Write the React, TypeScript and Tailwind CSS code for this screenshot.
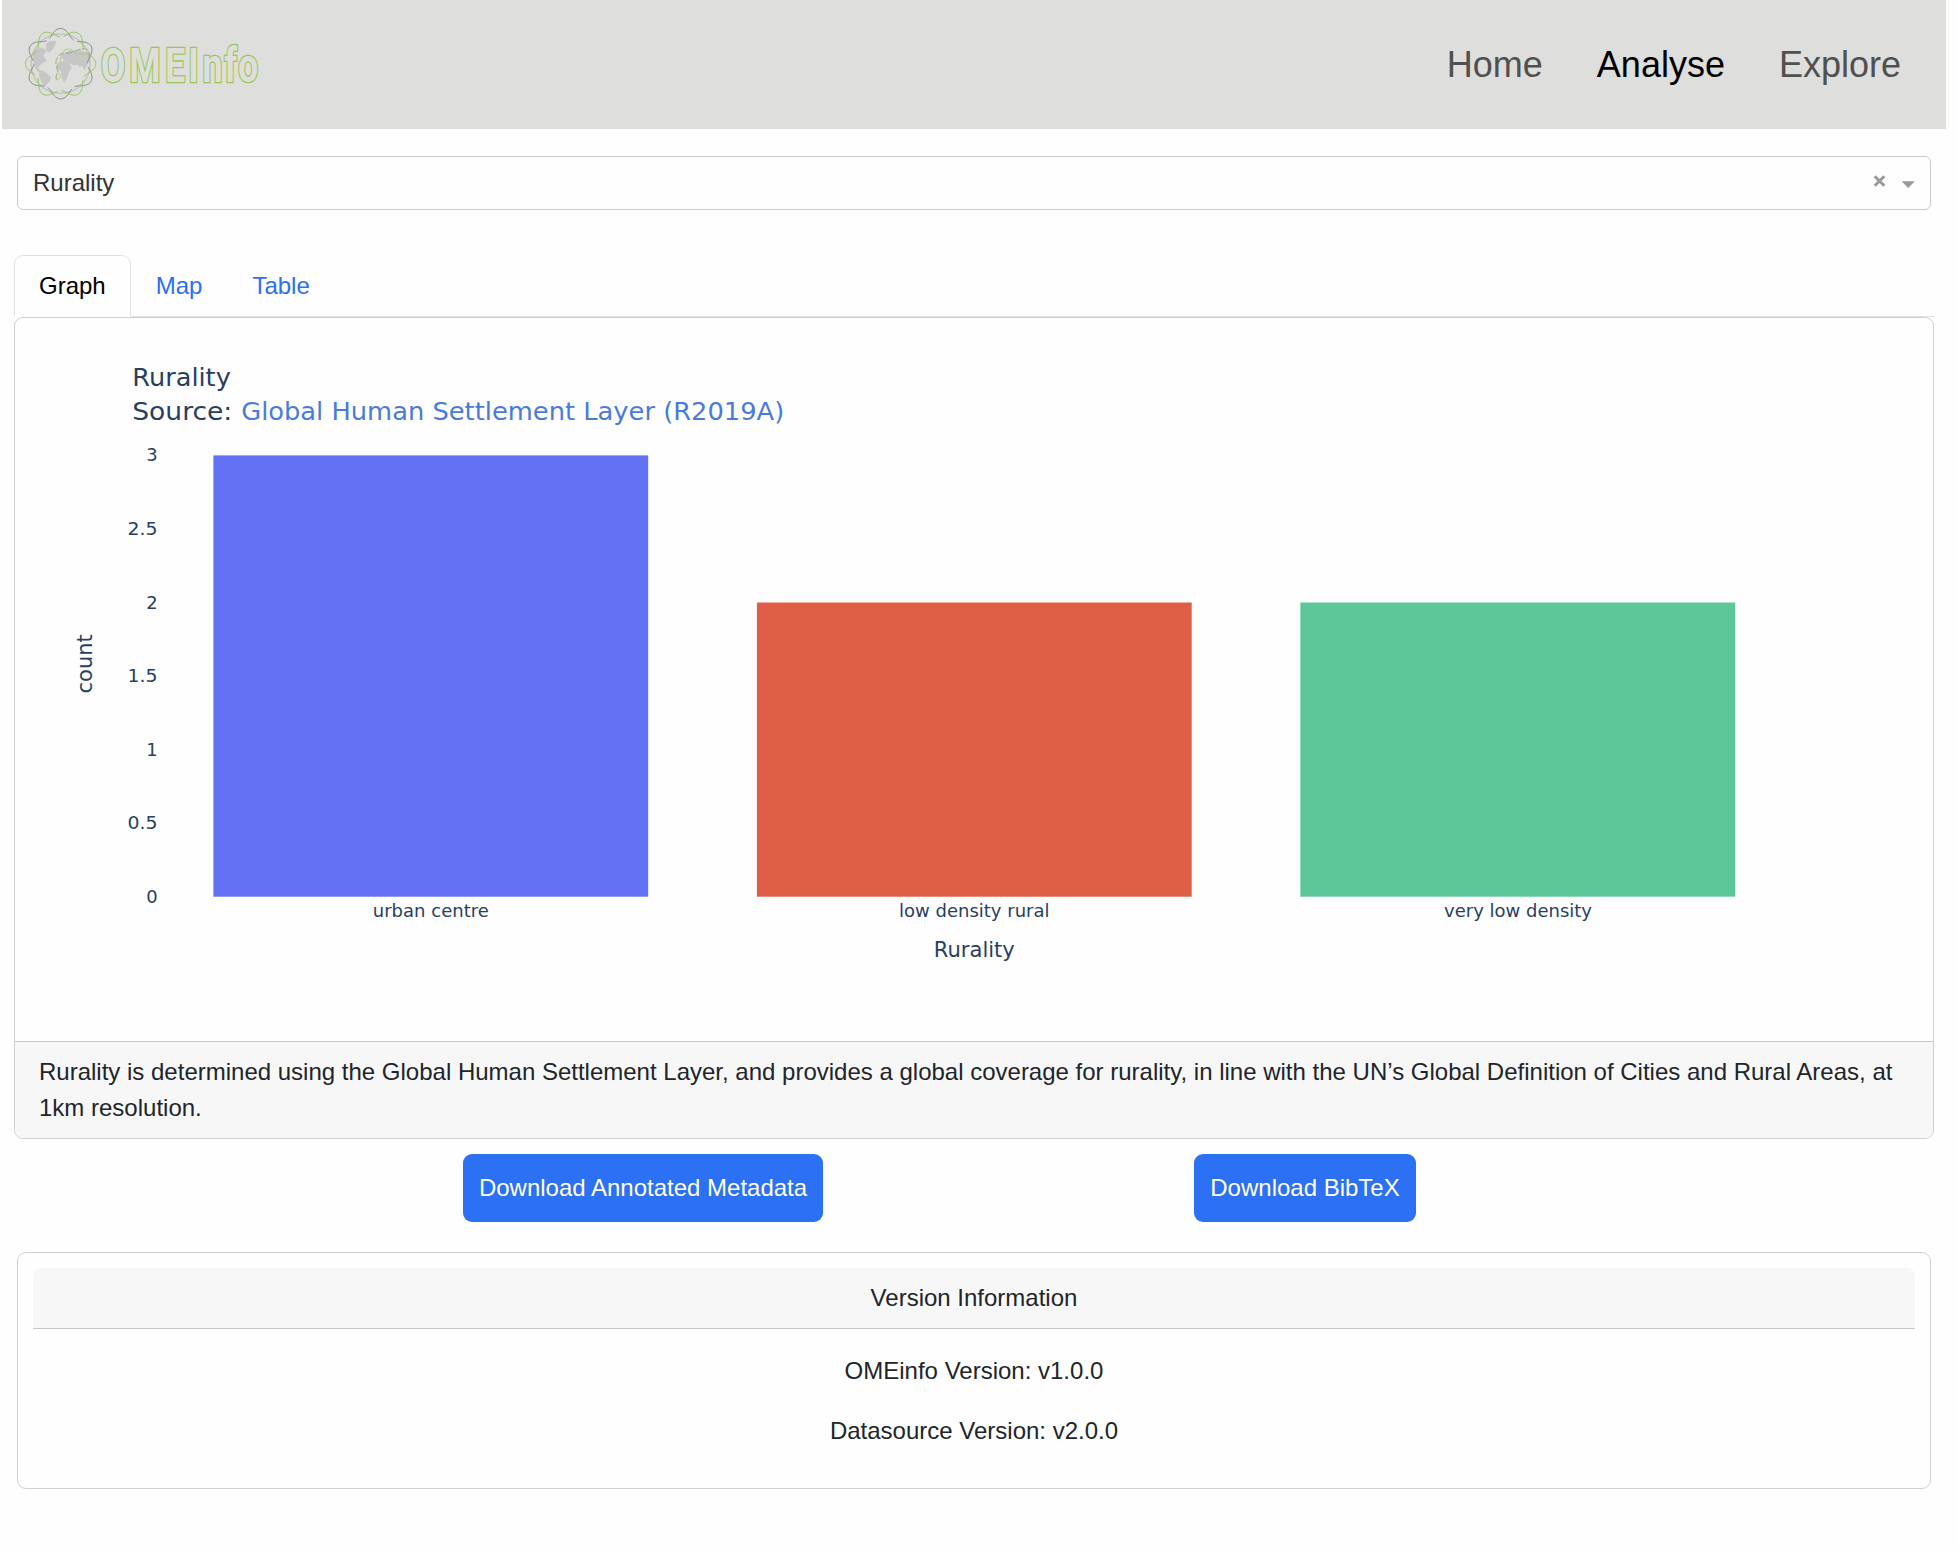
import React from 'react';

const wave = (sign: number) => {
  const points: string[] = [];
  for (let i = 0; i <= 240; i++) {
    const a = (i / 240) * Math.PI * 2;
    const r = 31 + sign * 4.2 * Math.cos(6 * a);
    points.push(`${(60.6 + r * Math.sin(a)).toFixed(2)},${(63.7 - r * Math.cos(a)).toFixed(2)}`);
  }
  return 'M' + points.join('L') + 'Z';
};

function Logo() {
  return (
    <svg className="block h-[129px] w-[270px]" viewBox="2 0 270 129" fill="none" role="img" aria-label="OMEInfo">
      <g fill="#c6c6c6">
        <path d="M33 51l5-4 4 1 3 1 1 3-3 4 4 4-2 2-4 2-3 4 4 5-5-2-3-6-1-7z" />
        <path d="M46 44l4-3 6 0-1 5-3 4-3 3-3-3z" />
        <path d="M39 70l5 1 3 3 4 3-1 4-4 4-2 2-3-6-2-5z" />
        <path d="M61 55l4-2 5-3 5 1 5-1 6 2 3 3 0 7-3 5-1 4-3-5-3 1-1-2-5 0-4-2-3-1-3-3z" />
        <path d="M59 62l5-1 5 2 3 5-3 4-2 6-3 5-2-5-1-6-4-5z" />
      </g>
      <circle cx="60.6" cy="63.7" r="29.6" stroke="#b6bdae" strokeWidth="1.5" opacity="0.7" />
      <path d={wave(1)} pathLength="360" stroke="#85868a" strokeWidth="1" strokeDasharray="54 6" strokeDashoffset="25" />
      <path d={wave(-1)} pathLength="360" stroke="#93c653" strokeWidth="1" strokeDasharray="54 6" strokeDashoffset="-5" />
      <path d="M57 80c-3-3 1-6 1-10 0-4-4-6-1-11 2-6 6-6 12-6 6-1 10-5 16-4 5 1 5 4 4 9" stroke="#9a9b9d" strokeWidth="0.9" strokeDasharray="7 1.4" />
      <path d="M57 70c-2-5 3-6 4-12 0-6 4-9 8-9 4 0 5 5 10 5l6 0" stroke="#a0cd66" strokeWidth="0.9" strokeDasharray="8 1.4" />
      <path d="M56.5 79c-1-4 3-8 4-4 0 3-2 5-4 4" stroke="#a0cd66" strokeWidth="0.8" />
      <text
        transform="scale(.75 1)"
        x="134.4 172.5 220 250.9 269.9 298.9 317.5"
        y="82.3"
        fontFamily="Roboto"
        fontWeight="700"
        fontSize="47.8"
        fill="#dededc"
        stroke="#97c657"
        strokeWidth="2.6"
        paintOrder="stroke"
      >
        OMEInfo
      </text>
    </svg>
  );
}

const BARS = [
  { label: 'urban centre', x: 213.4, top: 455.4, color: '#6371f4', lx: 372.8, lw: 116 },
  { label: 'low density rural', x: 756.9, top: 602.5, color: '#de5e46', lx: 899, lw: 150.5 },
  { label: 'very low density', x: 1300.4, top: 602.5, color: '#5ec79a', lx: 1444, lw: 148 },
];

const TICKS = [
  { label: '3', y: 461.4, w: 11.4 },
  { label: '2.5', y: 534.8, w: 30 },
  { label: '2', y: 608.6, w: 11.4 },
  { label: '1.5', y: 681.8, w: 30 },
  { label: '1', y: 755.6, w: 11.4 },
  { label: '0.5', y: 829.4, w: 30 },
  { label: '0', y: 902.6, w: 11.4 },
];

function BarChart() {
  return (
    <svg className="block h-[723px] w-[1918px]" viewBox="15 318 1918 723" fontFamily="'DejaVu Sans', sans-serif" fill="#2a3f5f">
      <text x="132.3" y="386.2" fontSize="25.5" textLength="98.5" lengthAdjust="spacingAndGlyphs">Rurality</text>
      <text x="132.3" y="419.5" fontSize="25.5" textLength="100" lengthAdjust="spacingAndGlyphs">Source:</text>
      <text x="241.2" y="419.5" fontSize="25.5" fill="#4a7bd9" textLength="543" lengthAdjust="spacingAndGlyphs">
        Global Human Settlement Layer (R2019A)
      </text>
      {TICKS.map((t) => (
        <text key={t.label} x={157.6 - t.w} y={t.y} fontSize="17.6" textLength={t.w} lengthAdjust="spacingAndGlyphs">
          {t.label}
        </text>
      ))}
      {BARS.map((b) => (
        <g key={b.label}>
          <rect x={b.x} y={b.top} width="434.8" height={896.7 - b.top} fill={b.color} />
          <text x={b.lx} y="916.6" fontSize="17.6" textLength={b.lw} lengthAdjust="spacingAndGlyphs">
            {b.label}
          </text>
        </g>
      ))}
      <text x="933.8" y="956.6" fontSize="21" textLength="81" lengthAdjust="spacingAndGlyphs">Rurality</text>
      <text transform="translate(92.3 693.4) rotate(-90)" fontSize="21" textLength="59" lengthAdjust="spacingAndGlyphs">count</text>
    </svg>
  );
}

export default function App() {
  return (
    <div className="min-h-[1550px] w-[1958px] bg-[#fefefe] font-['Liberation_Sans',Arial,sans-serif] text-2xl/[36px] text-[#212529]">
      <header className="ml-[2px] flex h-[129px] w-[1944px] items-center justify-between bg-[#dededc] pr-[45px]">
        <Logo />
        <nav className="flex gap-[54px] text-[36px]/[54px] text-[#50504f]">
          <a>Home</a>
          <a className="text-black">Analyse</a>
          <a>Explore</a>
        </nav>
      </header>

      <div className="mt-[27px] ml-[17px] flex h-[54px] w-[1914px] items-center justify-between rounded-md border border-[#ccc] pr-[15px] pl-[15px] text-[#333]">
        <span>Rurality</span>
        <svg className="h-4 w-[42px]" viewBox="0 0 42 16" fill="none">
          <path d="M1.7 1.2l9.6 9.6M11.3 1.200l-9.6 9.6" stroke="#999" strokeWidth="2.9" />
          <path d="M28.600 6.300h13.200l-6.600 6.700z" fill="#999" />
        </svg>
      </div>

      <div className="mt-[45px] ml-[14px] flex h-[62px] w-[1920px] border-b border-[#dee2e6] text-[#2c70f3]">
        <div className="h-[62px] rounded-t-[9px] border border-[#dee2e6] border-b-[#fefefe] bg-[#fefefe] px-6 py-3 text-black">Graph</div>
        <div className="border border-transparent px-6 py-3">Map</div>
        <div className="border border-transparent px-6 py-3">Table</div>
      </div>

      <section className="ml-[14px] w-[1920px] overflow-hidden rounded-[9px] border border-[#d0d0d1]">
        <BarChart />
        <p className="border-t border-[#cbcbcb] bg-[#f7f7f7] px-6 py-3">
          Rurality is determined using the Global Human Settlement Layer, and provides a global coverage for rurality, in line
          with the UN’s Global Definition of Cities and Rural Areas, at 1km resolution.
        </p>
      </section>

      <div className="mt-[15px] ml-[463px] flex gap-[371px] text-white">
        <button className="h-[68px] w-[360px] rounded-[9px] bg-[#2c70f3] whitespace-nowrap">Download Annotated Metadata</button>
        <button className="h-[68px] w-[222px] rounded-[9px] bg-[#2c70f3] whitespace-nowrap">Download BibTeX</button>
      </div>

      <section className="mt-[30px] ml-[17px] h-[237px] w-[1914px] rounded-[9px] border border-[#d0d0d1] p-[15px] text-center">
        <h2 className="rounded-t-[8px] border-b border-[#c8c8c9] bg-[#f7f7f7] py-3">Version Information</h2>
        <p className="mt-6">OMEinfo Version: v1.0.0</p>
        <p className="mt-6">Datasource Version: v2.0.0</p>
      </section>
    </div>
  );
}
